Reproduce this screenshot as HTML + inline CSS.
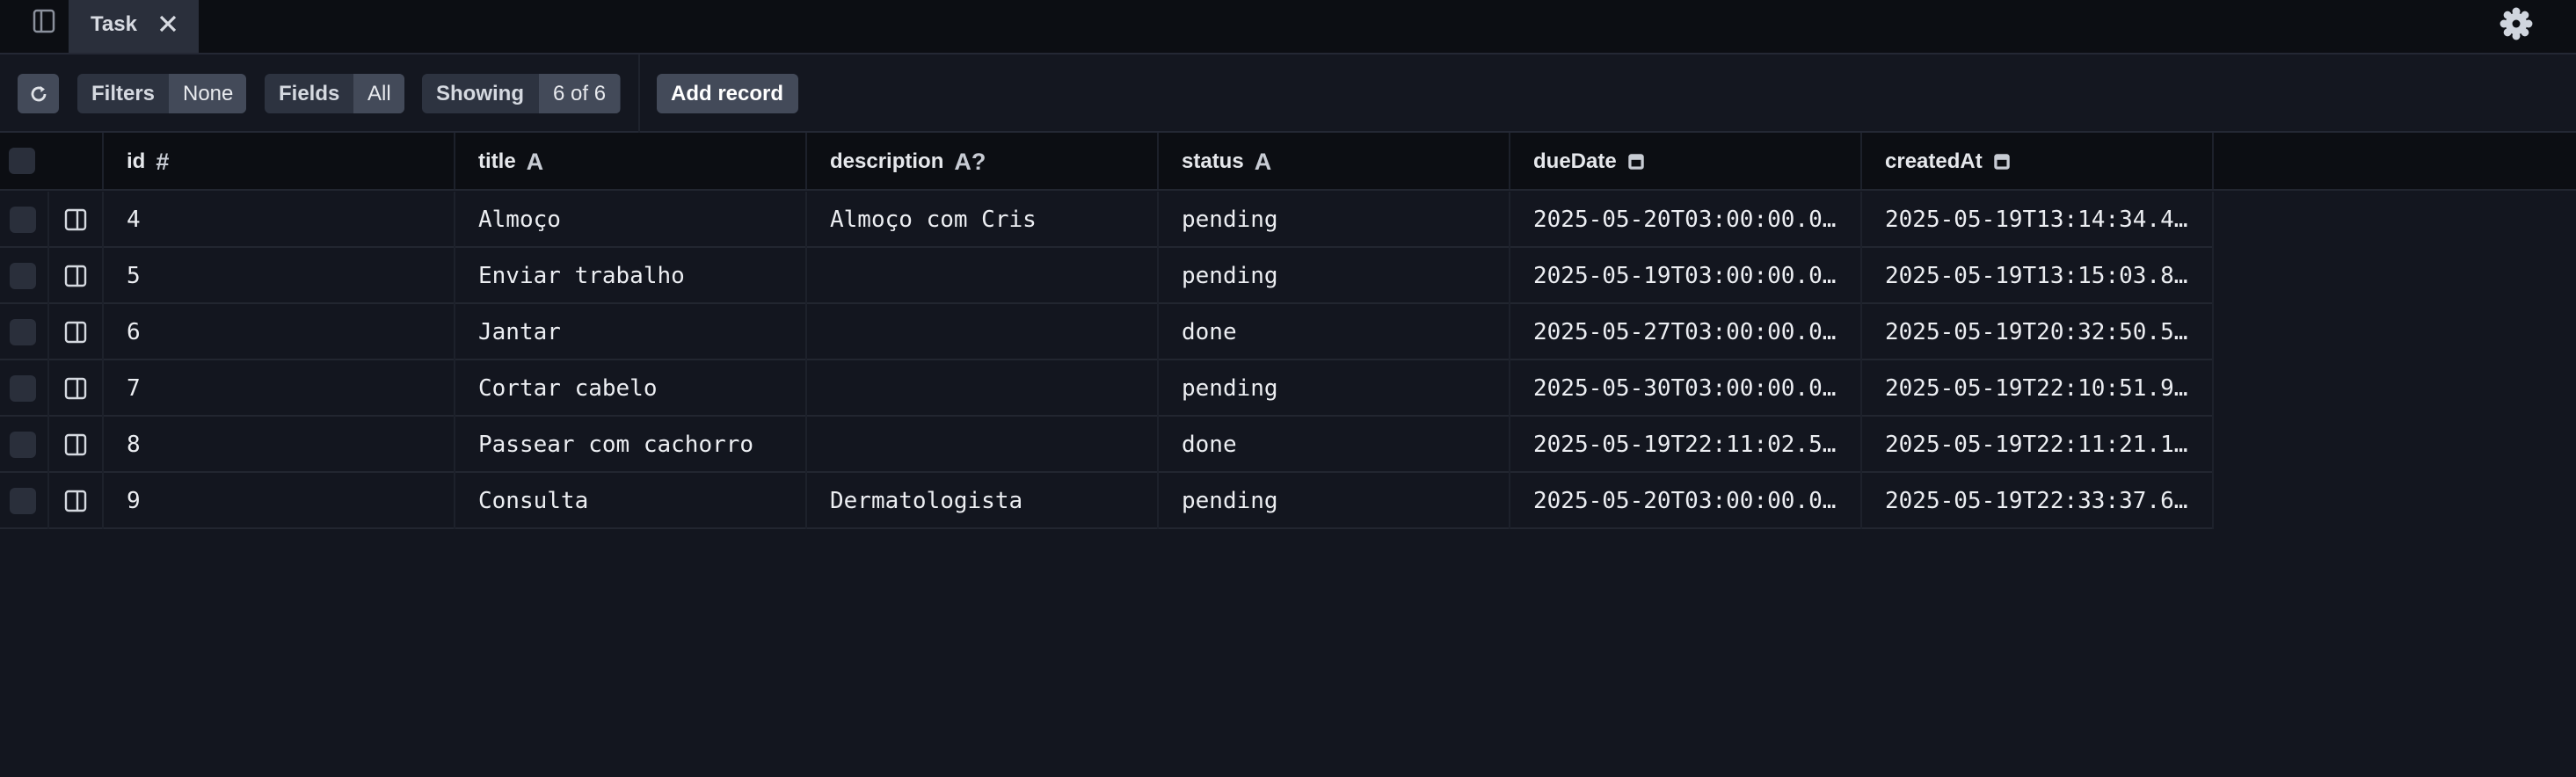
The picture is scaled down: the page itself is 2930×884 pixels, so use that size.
<!DOCTYPE html>
<html><head><meta charset="utf-8"><style>
*{box-sizing:border-box;margin:0;padding:0}
body{width:2930px;height:884px;background:#13161f;font-family:"Liberation Sans",sans-serif;color:#e6e8ec;position:relative;overflow:hidden}
.abs{position:absolute}
.tabbar{left:0;top:0;width:2930px;height:62px;background:#0c0e13;border-bottom:2px solid #242834}
.tab{left:78px;top:0;width:148px;height:60px;background:#2a2f3b;font-weight:bold;font-size:24px;color:#d8dbe2}
.toolbar{left:0;top:62px;width:2930px;height:89px;background:#141720;border-bottom:2px solid #242834}
.btn{position:absolute;top:22px;height:45px;border-radius:6px;background:#2d3340;font-weight:bold;font-size:24px;color:#d5d9e0;display:flex;overflow:hidden}
.btn span{display:flex;align-items:center;padding:0 16px;height:100%}
.btn .v{background:#434a59;font-weight:normal;color:#e8eaee}
.hdr{left:0;top:151px;width:2930px;height:66px;background:#0c0e13;border-bottom:2px solid #222630}
.cell{position:absolute;height:64px;display:flex;align-items:center;padding-left:26px;border-right:2px solid #1d212b;white-space:nowrap}
.h{font-weight:bold;font-size:24px;color:#e6e8ec;padding-top:2px}
.h i{font-style:normal;margin-left:12px;color:#c8ccd4;font-size:27px}
.m{font-family:"DejaVu Sans Mono","Liberation Mono",monospace;font-size:26px;color:#eceef2}
.row{position:absolute;left:0;width:2518px;height:64px;border-bottom:2px solid #222630}
.cb{position:absolute;left:10px;width:30px;height:30px;border-radius:6px;background:#2a2f3b}
</style></head><body>
<div class="abs tabbar"></div>
<svg class="abs" style="left:36px;top:10px" width="28" height="28" viewBox="0 0 28 28"><rect x="3" y="2" width="22" height="24" rx="3" fill="none" stroke="#8a909c" stroke-width="2.5"/><line x1="11" y1="2" x2="11" y2="26" stroke="#8a909c" stroke-width="2.5"/></svg>
<div class="abs tab"><span class="abs" style="left:25px;top:14px">Task</span>
<svg class="abs" style="left:102px;top:16px" width="22" height="22" viewBox="0 0 22 22"><path d="M3 3L19 19M19 3L3 19" stroke="#d8dbe2" stroke-width="3.2"/></svg></div>
<svg class="abs" style="left:2843px;top:8px" width="38" height="38" viewBox="0 0 34 34"><defs><g id="t"><circle cx="17" cy="4.5" r="4"/><circle cx="17" cy="29.5" r="4"/></g></defs><g fill="#d0d5de"><circle cx="17" cy="17" r="11"/><use href="#t"/><use href="#t" transform="rotate(45 17 17)"/><use href="#t" transform="rotate(90 17 17)"/><use href="#t" transform="rotate(135 17 17)"/></g><circle cx="17" cy="17" r="4" fill="#0c0e13"/></svg>

<div class="abs toolbar">
<div class="btn" style="left:20px;width:47px;justify-content:center;align-items:center;background:#434a59"><svg width="24" height="24" viewBox="0 0 24 24"><path d="M19 12a7 7 0 1 1-2.5-5.4" fill="none" stroke="#e0e3e8" stroke-width="2.8"/><path d="M14 3l5 3.5-4.5 3.5z" fill="#e0e3e8"/></svg></div>
<div class="btn" style="left:88px;width:192px"><span style="width:104px">Filters</span><span class="v">None</span></div>
<div class="btn" style="left:301px;width:159px"><span style="width:101px">Fields</span><span class="v">All</span></div>
<div class="btn" style="left:480px;width:226px"><span style="width:133px">Showing</span><span class="v">6 of 6</span></div>
<div class="abs" style="left:726px;top:0;width:2px;height:89px;background:#1f232d"></div>
<div class="btn" style="left:747px;width:161px;background:#434a59;color:#fff"><span>Add record</span></div>
</div>

<div class="abs hdr">
<div class="cb" style="top:17px"></div>
<div class="cell" style="left:0;width:118px;padding:0"></div>
<div class="cell h" style="left:118px;width:400px">id<i>#</i></div>
<div class="cell h" style="left:518px;width:400px">title<i>A</i></div>
<div class="cell h" style="left:918px;width:400px">description<i>A?</i></div>
<div class="cell h" style="left:1318px;width:400px">status<i>A</i></div>
<div class="cell h" style="left:1718px;width:400px">dueDate<svg style="margin-left:12px" width="20" height="24" viewBox="0 0 18 22"><rect x="1" y="3" width="16" height="16" rx="3" fill="#c8ccd4"/><rect x="4" y="9" width="10" height="7" fill="#0c0e13"/></svg></div>
<div class="cell h" style="left:2118px;width:400px">createdAt<svg style="margin-left:12px" width="20" height="24" viewBox="0 0 18 22"><rect x="1" y="3" width="16" height="16" rx="3" fill="#c8ccd4"/><rect x="4" y="9" width="10" height="7" fill="#0c0e13"/></svg></div>
</div>

<div id="rows"></div>
<script>
var d=[["4","Almoço","Almoço com Cris","pending","2025-05-20T03:00:00.0…","2025-05-19T13:14:34.4…"],
["5","Enviar trabalho","","pending","2025-05-19T03:00:00.0…","2025-05-19T13:15:03.8…"],
["6","Jantar","","done","2025-05-27T03:00:00.0…","2025-05-19T20:32:50.5…"],
["7","Cortar cabelo","","pending","2025-05-30T03:00:00.0…","2025-05-19T22:10:51.9…"],
["8","Passear com cachorro","","done","2025-05-19T22:11:02.5…","2025-05-19T22:11:21.1…"],
["9","Consulta","Dermatologista","pending","2025-05-20T03:00:00.0…","2025-05-19T22:33:37.6…"]];
var h="";
d.forEach(function(r,i){var t=218+i*64;
h+='<div class="row" style="top:'+t+'px"><div class="cb" style="top:17px;left:11px"></div>'+
'<div class="cell" style="left:0;width:56px;padding:0"></div>'+
'<div class="cell" style="left:56px;width:62px;padding:0;justify-content:center"><svg width="26" height="26" viewBox="0 0 26 26"><rect x="2" y="2" width="22" height="22" rx="3" fill="none" stroke="#d5d9e0" stroke-width="2.4"/><line x1="15" y1="2" x2="15" y2="24" stroke="#d5d9e0" stroke-width="2.4"/></svg></div>';
for(var j=0;j<6;j++)h+='<div class="cell m" style="left:'+(118+j*400)+'px;width:400px">'+r[j]+'</div>';
h+='</div>';});
document.getElementById("rows").innerHTML=h;
</script>
</body></html>
